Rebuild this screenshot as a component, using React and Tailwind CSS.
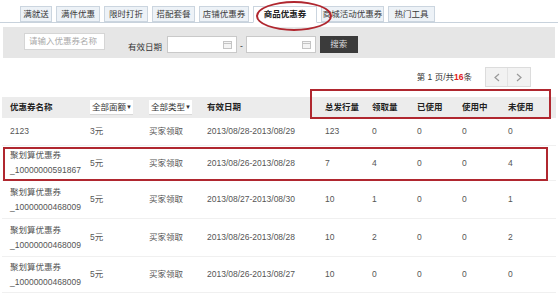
import React from 'react'

const tabs = [
  { label: '满就送', w: 'w-[32px]' },
  { label: '满件优惠', w: 'w-[44px]' },
  { label: '限时打折', w: 'w-[44px]' },
  { label: '搭配套餐', w: 'w-[43px]' },
  { label: '店铺优惠券', w: 'w-[50px]' },
  { label: '商品优惠券', w: 'w-[64px]', active: true },
  { label: '商城活动优惠券', w: 'w-[63px]' },
  { label: '热门工具', w: 'w-[47px]' },
]

const rows = [
  { name: ['2123'], amount: '3元', date: '2013/08/28-2013/08/29', nums: ['123', '0', '0', '0', '0'], h: 'h-[28px]' },
  { name: ['聚划算优惠券', '_10000000591867'], amount: '5元', date: '2013/08/26-2013/08/28', nums: ['7', '4', '0', '0', '4'], h: 'h-[35px]' },
  { name: ['聚划算优惠券', '_10000000468009'], amount: '5元', date: '2013/08/27-2013/08/30', nums: ['10', '1', '0', '0', '1'], h: 'h-[38px]' },
  { name: ['聚划算优惠券', '_10000000468009'], amount: '5元', date: '2013/08/26-2013/08/28', nums: ['10', '2', '0', '0', '2'], h: 'h-[38px]' },
  { name: ['聚划算优惠券', '_10000000468009'], amount: '5元', date: '2013/08/26-2013/08/27', nums: ['10', '0', '0', '0', '0'], h: 'h-[36px]' },
]

const cols = 'grid grid-cols-[80px_59px_58px_118px_47px_45px_45px_46px_1fr] items-center pl-[8px] whitespace-nowrap'

function DateInput() {
  return (
    <div className="w-[70px] h-[17px] bg-white border border-[#c9c9c9] flex items-center justify-end pr-[4px]">
      <svg width="9" height="8" viewBox="0 0 9 8">
        <rect x="0.5" y="0.5" width="8" height="7" fill="#f4f4f4" stroke="#c4c4c4" />
        <line x1="0.5" y1="2.5" x2="8.5" y2="2.5" stroke="#c4c4c4" />
      </svg>
    </div>
  )
}

function Select({ label }) {
  return (
    <div className="flex items-center w-[43px] h-[15px] bg-white text-[#333] font-normal border-b border-[#d8d8d8]">
      <span className="pl-[2px]">{label}</span>
      <span className="ml-auto mr-[3px] text-[6px]">▼</span>
    </div>
  )
}

export default function App() {
  return (
    <div
      className="relative w-[558px] h-[299px] bg-white overflow-hidden text-[8.5px] text-[#555] whitespace-nowrap"
      style={{ fontFamily: '"Liberation Sans", "Noto Sans CJK SC", sans-serif' }}
    >
      {/* tabs */}
      <div className="pt-[6px] border-b border-[#c8d2dc] h-[23px]">
        <div className="flex gap-[4px] pl-[20px]">
          {tabs.map((t) => (
            <div
              key={t.label}
              className={`${t.w} flex items-center justify-center border border-[#cbd5df] ${
                t.active ? 'bg-white border-b-white font-bold text-[#222] h-[17px]' : 'bg-[#edf2f7] text-[#3a3a3a] h-[16px]'
              }`}
            >
              {t.label}
            </div>
          ))}
        </div>
      </div>

      {/* filter bar */}
      <div className="mt-[4px] mx-[3px] h-[31px] bg-[#e6e6e6] flex items-start">
        <div className="ml-[21px] mt-[6px] w-[81px] h-[17px] bg-white border border-[#d5d5d5] flex items-center pl-[4px] text-[#aaa]">
          请输入优惠券名称
        </div>
        <div className="ml-[23px] mt-[14px] text-[#333]">有效日期</div>
        <div className="ml-[5px] mt-[9px]">
          <DateInput />
        </div>
        <div className="mx-[3px] mt-[13px] text-[#333]">-</div>
        <div className="mt-[9px]">
          <DateInput />
        </div>
        <div className="ml-[4px] mt-[9px] w-[38px] h-[17px] bg-[#3b3b3b] text-[#ddd] flex items-center justify-center">
          搜索
        </div>
      </div>

      {/* pagination */}
      <div className="flex justify-end items-center pr-[27px] mt-[9px] h-[20px]">
        <span className="text-[#333]">
          第 1 页/共<span className="text-[#e02020] font-bold">16</span>条
        </span>
        <div className="ml-[13px] flex h-[20px] border border-[#dcdcdc] bg-[#f2f2f2]">
          <div className="w-[22px] flex items-center justify-center border-r border-[#e2e2e2]">
            <svg width="6" height="9" viewBox="0 0 6 9">
              <polyline points="5,1 1,4.5 5,8" fill="none" stroke="#999" strokeWidth="1.2" />
            </svg>
          </div>
          <div className="w-[22px] flex items-center justify-center">
            <svg width="6" height="9" viewBox="0 0 6 9">
              <polyline points="1,1 5,4.5 1,8" fill="none" stroke="#999" strokeWidth="1.2" />
            </svg>
          </div>
        </div>
      </div>

      {/* table header */}
      <div className={`${cols} mt-[10px] mx-[2px] h-[21px] bg-[#ececec] font-bold text-[#222]`}>
        <div>优惠券名称</div>
        <Select label="全部面额" />
        <Select label="全部类型" />
        <div>有效日期</div>
        <div>总发行量</div>
        <div>领取量</div>
        <div>已使用</div>
        <div>使用中</div>
        <div>未使用</div>
      </div>

      {/* rows */}
      {rows.map((r, i) => (
        <div key={i} className={`${cols} ${r.h} mx-[2px] border-b border-[#f0f0f0]`}>
          <div className="leading-[15px]">
            {r.name.map((n, j) => (
              <div key={j}>{n}</div>
            ))}
          </div>
          <div>{r.amount}</div>
          <div>买家领取</div>
          <div>{r.date}</div>
          {r.nums.map((n, j) => (
            <div key={j}>{n}</div>
          ))}
        </div>
      ))}

      {/* annotations */}
      <div className="absolute left-[256px] top-[1px] w-[76px] h-[30px] rounded-[50%] border-2 border-[#b0272f] pointer-events-none" />
      <div className="absolute left-[310px] top-[89px] w-[241px] h-[30px] border-2 border-[#b0272f] pointer-events-none" />
      <div className="absolute left-[3px] top-[147px] w-[545px] h-[34px] border-2 border-[#b0272f] pointer-events-none" />
    </div>
  )
}
